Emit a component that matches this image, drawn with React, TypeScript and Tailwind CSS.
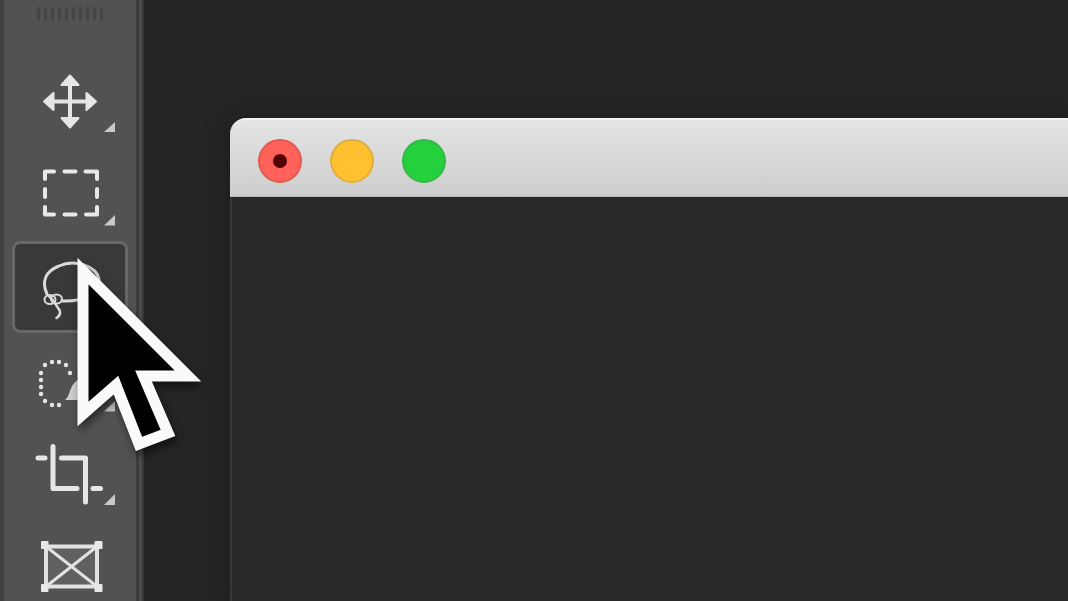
import type { ReactNode } from "react";

type Tool = { name: string; view: string; icon: ReactNode; flyout?: string };

const tools: Tool[] = [
  {
    name: "Move tool",
    view: "15 58 110 86",
    flyout: "M115 122V132H104Z",
    icon: (
      <>
        <path d="M70 82V121M50 101.500H90" stroke="#e6e6e6" strokeWidth="4" />
        <path
          d="M70 75.500L78.500 85H61.500ZM70 127.500L78.500 118H61.500ZM44 101.500L53.500 93V110ZM96 101.500L86.500 93V110Z"
          fill="#e6e6e6"
          stroke="#e6e6e6"
          strokeWidth="2"
          strokeLinejoin="round"
        />
      </>
    ),
  },
  {
    name: "Rectangular marquee tool",
    view: "15 151 110 86",
    flyout: "M115 215V225.500H104Z",
    icon: (
      <path
        d="M45 179V171.500H54M64.500 171.500H75.500M85.500 171.500H97V179M97 189V197M97 207V214.500H86M75.500 214.500H64.500M54 214.500H45V207M45 197V189"
        fill="none"
        stroke="#e8e8e8"
        strokeWidth="4"
        strokeLinecap="round"
        strokeLinejoin="round"
      />
    ),
  },
  {
    name: "Lasso tool",
    view: "15 244 110 86",
    icon: (
      <g fill="none" stroke="#dadada" strokeWidth="3" strokeLinecap="round">
        <path d="M47 294C41 281 46 271 59 266C75 259 96 266 99 279C100 293 84 302 62 301" />
        <ellipse cx="50" cy="299.500" rx="5.500" ry="4.500" strokeWidth="2" />
        <ellipse cx="56.500" cy="299" rx="5.500" ry="4.500" strokeWidth="2" />
        <path d="M49 296C53 300 56 304 58 308C61 311 61 315 56.500 318" strokeWidth="2.500" />
      </g>
    ),
  },
  {
    name: "Quick selection tool",
    view: "15 337 110 86",
    flyout: "M115 401V411.500H104Z",
    icon: (
      <>
        <g fill="#e6e6e6">
          {[
            [52, 362], [59, 362], [45, 365], [66, 365], [41, 373], [70, 373],
            [41, 380], [41, 387], [41, 394], [45, 401], [52, 405], [59, 405],
          ].map(([x, y]) => (
            <circle key={x + "-" + y} cx={x} cy={y} r="2.200" />
          ))}
        </g>
        <path d="M65 400C71 396 69 383 80 379V400Z" fill="#cfcfcf" />
      </>
    ),
  },
  {
    name: "Crop tool",
    view: "15 430 110 86",
    flyout: "M115 494V505H104Z",
    icon: (
      <path
        d="M38 458H45M53 446.500V488.500H77M61.500 458H85.500V502M93 488.500H100.500"
        fill="none"
        stroke="#e6e6e6"
        strokeWidth="5"
        strokeLinecap="round"
        strokeLinejoin="round"
      />
    ),
  },
  {
    name: "Frame tool",
    view: "15 523 110 86",
    icon: (
      <>
        <path d="M46 546.500H97V586.500H46Z" fill="#606060" stroke="#e2e2e2" strokeWidth="4" />
        <path d="M46 546.500L97 586.500M97 546.500L46 586.500" stroke="#e2e2e2" strokeWidth="3" />
        <path
          d="M42 542H47.500V548H42ZM95.500 542H101.500V548H95.500ZM42 585H47.500V591H42ZM95.500 585H101.500V591H95.500Z"
          fill="#e8e8e8"
          stroke="#e8e8e8"
          strokeWidth="2"
          strokeLinejoin="round"
        />
      </>
    ),
  },
];

function ToolButton({ tool, active }: { tool: Tool; active: boolean }) {
  return (
    <button
      type="button"
      aria-label={tool.name}
      aria-pressed={active}
      className={
        active
          ? "w-full shrink-0 rounded-lg border-3 border-[#676767] bg-[#393939]"
          : "w-full shrink-0 rounded-lg border-3 border-transparent"
      }
    >
      <svg viewBox={tool.view} className="block w-full" aria-hidden="true">
        {tool.icon}
        {tool.flyout && <path d={tool.flyout} fill="#c8c8c8" />}
      </svg>
    </button>
  );
}

function Toolbar() {
  return (
    <aside className="flex w-36 shrink-0 border-l-4 border-[#404040] bg-[#4a4a4a]">
      <div className="flex flex-1 flex-col gap-px bg-[#525252] px-2">
        <div className="flex h-[54px] shrink-0 justify-center gap-1 pt-[7px]">
          {Array.from({ length: 10 }, (_, i) => (
            <span key={i} className="h-3.5 w-[3px] bg-[#454545]" />
          ))}
        </div>
        {tools.map((tool) => (
          <ToolButton key={tool.name} tool={tool} active={tool.name === "Lasso tool"} />
        ))}
      </div>
      <div className="w-2 border-r-2 border-l-3 border-r-[#383838] border-l-[#3c3c3c] bg-[#4c4c4c]" />
    </aside>
  );
}

function DocumentWindow() {
  return (
    <main className="mt-[118px] ml-[86px] flex min-w-0 flex-1 flex-col rounded-tl-2xl bg-[#282828] shadow-[0_0_24px_#1c1c1c]">
      <header className="flex h-[79px] shrink-0 items-center gap-7 rounded-tl-2xl border-t-2 border-b border-t-[#f2f2f2] border-b-[#b5b5b5] bg-linear-to-b from-[#e4e4e4] to-[#cdcdcd] px-7 pt-1.5">
        <button
          type="button"
          aria-label="Close"
          className="flex size-11 items-center justify-center rounded-full border-2 border-[#df5b52] bg-[#ff6258]"
        >
          <span className="size-3.5 rounded-full bg-[#540000]" />
        </button>
        <button
          type="button"
          aria-label="Minimize"
          className="size-11 rounded-full border-2 border-[#e0ad3f] bg-[#ffc130]"
        />
        <button
          type="button"
          aria-label="Zoom"
          className="size-11 rounded-full border-2 border-[#38b749] bg-[#24d03e]"
        />
      </header>
      <div className="flex-1 border-l-2 border-[#383838]" />
    </main>
  );
}

function Pointer() {
  return (
    <svg
      viewBox="64 244 160 224"
      className="pointer-events-none absolute top-[244px] left-16 h-56 w-40 drop-shadow-[2px_5px_4px_#0008]"
      aria-hidden="true"
    >
      <path
        d="M83 271V414L116 385L139 444L168 433L143.500 376H188Z"
        fill="#000"
        stroke="#fafafa"
        strokeWidth="11"
        strokeMiterlimit="8"
      />
    </svg>
  );
}

export default function App() {
  return (
    <div className="relative flex h-screen overflow-hidden bg-[#252525]">
      <Toolbar />
      <DocumentWindow />
      <Pointer />
    </div>
  );
}
